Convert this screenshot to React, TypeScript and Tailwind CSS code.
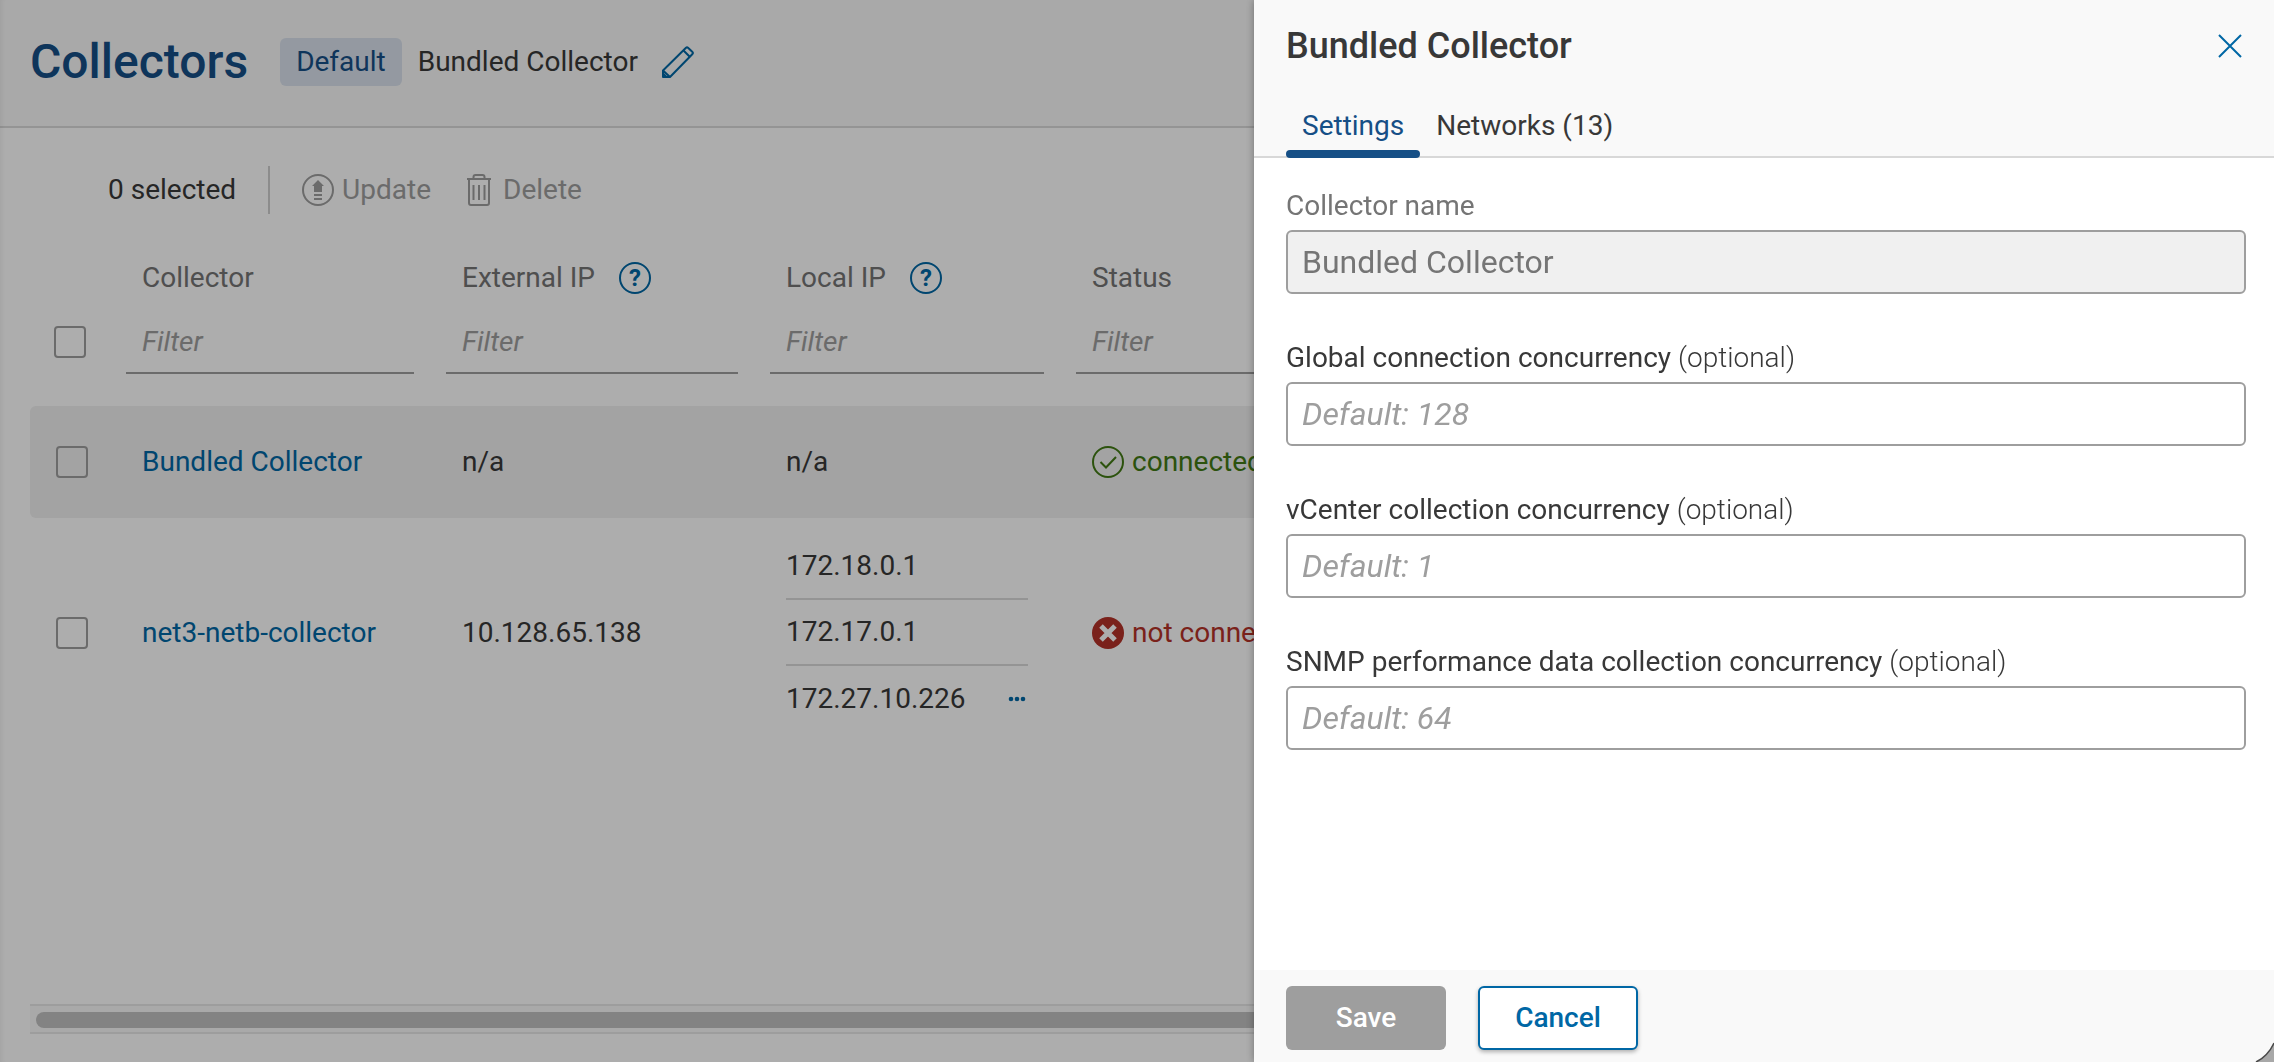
import { useState } from "react";
import type { ReactNode } from "react";

interface Collector {
  id: string;
  name: string;
  externalIp: string;
  localIps: string[];
  connected: boolean;
}

interface SettingsField {
  id: string;
  label: string;
  placeholder: string;
}

const collectors: Collector[] = [
  {
    id: "bundled",
    name: "Bundled Collector",
    externalIp: "n/a",
    localIps: ["n/a"],
    connected: true,
  },
  {
    id: "net3",
    name: "net3-netb-collector",
    externalIp: "10.128.65.138",
    localIps: ["172.18.0.1", "172.17.0.1", "172.27.10.226"],
    connected: false,
  },
];

const columns = [
  { key: "collector", label: "Collector", help: false },
  { key: "external", label: "External IP", help: true },
  { key: "local", label: "Local IP", help: true },
  { key: "status", label: "Status", help: false },
];

const settingsFields: SettingsField[] = [
  {
    id: "global-concurrency",
    label: "Global connection concurrency",
    placeholder: "Default: 128",
  },
  {
    id: "vcenter-concurrency",
    label: "vCenter collection concurrency",
    placeholder: "Default: 1",
  },
  {
    id: "snmp-concurrency",
    label: "SNMP performance data collection concurrency",
    placeholder: "Default: 64",
  },
];

function PencilIcon() {
  return (
    <svg width="32" height="32" viewBox="0 0 32 32" fill="none" stroke="currentColor" strokeWidth="2" strokeLinejoin="round">
      <path d="M1 24.5L24 1.800Q25 0.900 26 1.800L30.500 6Q31.300 7 30.500 8L8 31H1Z" />
      <path d="M21.500 4.500L28 11M1 24.500L8 31" />
      <path d="M1 27.500L4.500 31" />
    </svg>
  );
}

function UpdateIcon() {
  return (
    <svg width="32" height="32" viewBox="0 0 32 32" fill="currentColor">
      <circle cx="16" cy="16" r="15" fill="none" stroke="currentColor" strokeWidth="2" />
      <path d="M16 6L22 12H20V18H12V12H10Z" />
      <path d="M12 20H20V22H12ZM12 24H20V26H12Z" />
    </svg>
  );
}

function TrashIcon() {
  return (
    <svg width="24" height="32" viewBox="0 0 24 32" fill="none" stroke="currentColor" strokeWidth="2">
      <path d="M0 5H24M6.500 5V3Q6.500 1 8.500 1H15.500Q17.500 1 17.500 3V5" />
      <path d="M2 5V29Q2 31 4 31H20Q22 31 22 29V5" />
      <path d="M6.500 11V26M12 11V26M17.500 11V26" />
    </svg>
  );
}

function CheckCircleIcon() {
  return (
    <svg width="32" height="32" viewBox="0 0 32 32" fill="none" stroke="currentColor" strokeWidth="2">
      <circle cx="16" cy="16" r="15" />
      <path d="M8.500 16L14 21.500L24 11" />
    </svg>
  );
}

function ErrorCircleIcon() {
  return (
    <svg width="32" height="32" viewBox="0 0 32 32">
      <circle cx="16" cy="16" r="16" fill="currentColor" />
      <path d="M9 9L23 23M23 9L9 23" stroke="#fff" strokeWidth="5" />
    </svg>
  );
}

function CloseIcon() {
  return (
    <svg width="24" height="24" viewBox="0 0 24 24" stroke="currentColor" strokeWidth="2">
      <path d="M1 1L23 23M23 1L1 23" />
    </svg>
  );
}

function MoreIcon() {
  return (
    <svg width="18" height="6" viewBox="0 0 18 6" fill="currentColor">
      <circle cx="3" cy="3" r="2.300" />
      <circle cx="9" cy="3" r="2.300" />
      <circle cx="15" cy="3" r="2.300" />
    </svg>
  );
}

function Checkbox({ label }: { label: string }) {
  return (
    <input
      type="checkbox"
      aria-label={label}
      className="block size-8 appearance-none rounded-sm border-2 border-[#9e9e9e] checked:bg-[#0067a5]"
    />
  );
}

function Status({ connected }: { connected: boolean }) {
  return connected ? (
    <span className="flex items-center gap-2 text-[#417a14]">
      <CheckCircleIcon />
      connected
    </span>
  ) : (
    <span className="flex items-center gap-2 text-[#b43228]">
      <ErrorCircleIcon />
      not connected
    </span>
  );
}

function LocalIps({ ips }: { ips: string[] }) {
  if (ips.length === 1) return <>{ips[0]}</>;

  return (
    <ul className="divide-y-2 divide-[#dadada]">
      {ips.map((ip, index) => (
        <li key={ip} className="flex h-[66px] items-center justify-between">
          {ip}
          {index === ips.length - 1 && (
            <button aria-label="Show all local IPs" className="pr-0.5 text-[#0067a5]">
              <MoreIcon />
            </button>
          )}
        </li>
      ))}
    </ul>
  );
}

function CollectorsTable() {
  return (
    <table className="w-full table-fixed border-separate border-spacing-0 text-left whitespace-nowrap">
      <colgroup>
        <col className="w-24" />
        <col className="w-[320px]" />
        <col className="w-[324px]" />
        <col className="w-[306px]" />
        <col />
      </colgroup>
      <thead>
        <tr>
          <th className="pb-12 pl-6 align-bottom">
            <Checkbox label="Select all collectors" />
          </th>
          {columns.map((column) => (
            <th key={column.key} className="pt-12 pr-8 pb-8 font-normal">
              <div className="flex h-8 items-center gap-6 pl-4 text-[#757575]">
                {column.label}
                {column.help && (
                  <button
                    aria-label={`About ${column.label}`}
                    className="flex size-8 items-center justify-center rounded-full border-2 border-[#0067a5] text-2xl leading-none font-bold text-[#0067a5]"
                  >
                    ?
                  </button>
                )}
              </div>
              <input
                type="text"
                aria-label={`Filter by ${column.label}`}
                placeholder="Filter"
                className="mt-4 block h-16 w-full border-b-2 border-[#9e9e9e] px-4 outline-none placeholder:text-[#9e9e9e] placeholder:italic"
              />
            </th>
          ))}
        </tr>
      </thead>
      <tbody>
        {collectors.map((collector) => (
          <tr key={collector.id} className="h-28 odd:bg-[#f0f0f0]">
            <td className="rounded-l-md pl-[26px]">
              <Checkbox label={`Select ${collector.name}`} />
            </td>
            <td className="px-4">
              <a href="#settings" className="text-[#0067a5]">
                {collector.name}
              </a>
            </td>
            <td className="px-4">{collector.externalIp}</td>
            <td className="py-4 pr-12 pl-4">
              <LocalIps ips={collector.localIps} />
            </td>
            <td className="px-4">
              <Status connected={collector.connected} />
            </td>
          </tr>
        ))}
      </tbody>
    </table>
  );
}

interface TabProps {
  active: boolean;
  onClick: () => void;
  children: ReactNode;
}

function Tab({ active, onClick, children }: TabProps) {
  return (
    <button
      role="tab"
      aria-selected={active}
      onClick={onClick}
      className={
        active
          ? "relative h-16 px-4 pt-1 text-[#164f86] after:absolute after:inset-x-0 after:-bottom-0.5 after:h-2 after:rounded-full after:bg-[#164f86]"
          : "relative h-16 px-4 pt-1 text-[#383838]"
      }
    >
      {children}
    </button>
  );
}

function SettingsDrawer() {
  const [tab, setTab] = useState("settings");

  return (
    <aside className="fixed inset-y-0 right-0 flex w-[1020px] max-w-full flex-col bg-white shadow-[0_0_8px_rgba(0,0,0,0.35)]">
      <header className="border-b-2 border-[#d8d8d8] bg-[#f9f9f9] px-8">
        <div className="flex h-23 items-center justify-between">
          <h2 className="text-4xl font-medium">Bundled Collector</h2>
          <button aria-label="Close" className="text-[#0067a5]">
            <CloseIcon />
          </button>
        </div>
        <div role="tablist" className="flex">
          <Tab active={tab === "settings"} onClick={() => setTab("settings")}>
            Settings
          </Tab>
          <Tab active={tab === "networks"} onClick={() => setTab("networks")}>
            Networks (13)
          </Tab>
        </div>
      </header>

      <form id="settings" className="flex flex-1 flex-col gap-12 overflow-hidden py-8 pr-7 pl-8">
        <div>
          <label htmlFor="collector-name" className="block leading-8 text-[#757575]">
            Collector name
          </label>
          <input
            id="collector-name"
            type="text"
            disabled
            value="Bundled Collector"
            className="mt-2 block h-16 w-full rounded-md border-2 border-[#9e9e9e] bg-[#f0f0f0] px-3.5 text-[32px] text-[#757575]"
          />
        </div>
        {settingsFields.map((field) => (
          <div key={field.id}>
            <label htmlFor={field.id} className="block leading-8">
              {field.label} <span className="font-light">(optional)</span>
            </label>
            <input
              id={field.id}
              type="text"
              placeholder={field.placeholder}
              className="mt-2 block h-16 w-full rounded-md border-2 border-[#9e9e9e] bg-white px-3.5 text-[32px] placeholder:text-[#9e9e9e] placeholder:italic"
            />
          </div>
        ))}
      </form>

      <footer className="flex gap-8 bg-[#f9f9f9] px-8 pt-4 pb-3">
        <button disabled className="h-16 w-40 rounded-md bg-[#9e9e9e] font-medium text-white">
          Save
        </button>
        <button className="h-16 w-40 rounded-md border-2 border-[#0067a5] bg-white font-medium text-[#0067a5] shadow-[0_2px_4px_rgba(0,0,0,0.3)]">
          Cancel
        </button>
      </footer>

      {/* Rounded window corner */}
      <svg className="absolute right-0 bottom-0" width="20" height="20" viewBox="0 0 20 20">
        <path d="M2 20Q14 14 20 1V20Z" fill="#a8a8a8" />
        <path d="M2 20Q14 14 20 1" fill="none" stroke="#4a4a4a" strokeWidth="1.500" />
      </svg>
    </aside>
  );
}

function App() {
  return (
    <div className="font-[Roboto,sans-serif] text-[28px] text-[#383838]">
      <div className="flex min-h-screen flex-col overflow-hidden bg-white">
        <header className="flex h-32 items-center border-b-2 border-[#dadada] bg-[#f9f9f9] px-[30px] pb-0.5">
          <h1 className="text-5xl font-medium text-[#164f86]">Collectors</h1>
          <span className="ml-8 flex h-12 items-center rounded-md bg-[#dae2ee] px-4 text-[#164f86]">
            Default
          </span>
          <span className="ml-4">Bundled Collector</span>
          <button aria-label="Change default collector" className="ml-6 text-[#0067a5]">
            <PencilIcon />
          </button>
        </header>

        <main className="flex flex-1 flex-col pb-7 pl-[30px]">
          <div className="mt-[38px] flex h-12 items-center pl-[78px]">
            <span>0 selected</span>
            <span className="ml-8 h-12 w-0.5 bg-[#cfcfcf]" />
            <button disabled className="ml-8 flex items-center gap-2 text-[#9e9e9e]">
              <UpdateIcon />
              Update
            </button>
            <button disabled className="ml-9 flex items-center gap-3 text-[#9e9e9e]">
              <TrashIcon />
              Delete
            </button>
          </div>

          <div className="flex-1">
            <CollectorsTable />
          </div>

          {/* Horizontal scroll track */}
          <div className="border-y-2 border-[#e8e8e8] bg-[#fafafa] pt-1.5 pb-1 pl-1.5">
            <div className="h-4 rounded-l-full bg-[#c1c1c1]" />
          </div>
        </main>
      </div>

      <div className="fixed inset-0 bg-black/32 shadow-[inset_6px_0_6px_-5px_rgba(0,0,0,0.08)]" />
      <SettingsDrawer />
    </div>
  );
}

export default App;
